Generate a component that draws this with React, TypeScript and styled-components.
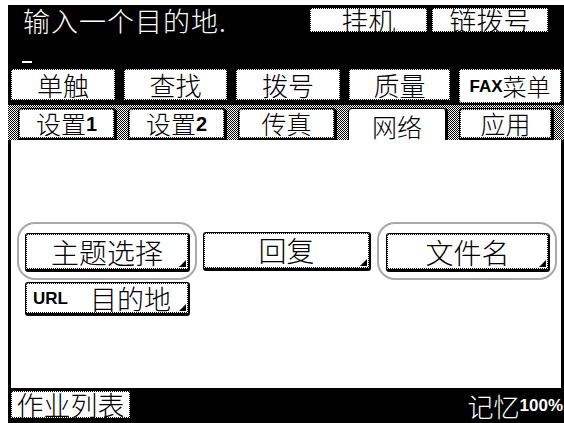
import React from "react";
import styled, {createGlobalStyle} from "styled-components";

// 1px checkerboard used for the dithered borders of the panel keys
const dither = "repeating-conic-gradient(#000 0% 25%, #fff 0% 50%)";

const GlobalStyle = createGlobalStyle`
  html, body {
    margin: 0;
    padding: 0;
    background: #fff;
  }
  body {
    font-family: "Noto Sans CJK SC", "Noto Sans", sans-serif;
  }
`;

const Frame = styled.div`
  width: 564px;
  height: 423px;
  box-sizing: border-box;
  padding: 5px 0 0 8px;
  overflow: hidden;
`;

const Screen = styled.div`
  width: 556px;
  height: 418px;
  background: #000;
  display: flex;
  flex-direction: column;
`;

const Header = styled.div`
  height: 63px;
  flex-shrink: 0;
  display: flex;
  justify-content: space-between;
  align-items: flex-start;
`;

const Prompt = styled.div`
  padding-left: 14px;
  display: flex;
  flex-direction: column;
  color: #fff;
`;

const PromptText = styled.div`
  font-size: 27px;
  font-weight: 300;
  line-height: 32px;
  padding-left: 1px;
  letter-spacing: 1px;
`;

const Cursor = styled.div`
  width: 10px;
  height: 2px;
  margin-top: 24px;
  background: #fff;
`;

const HeaderKeys = styled.div`
  display: flex;
  gap: 2px;
  margin: 2px 14px 0 0;
`;

const Key = styled.div<{ $w: number; $h: number; $size?: number; $more?: boolean; $open?: boolean; $start?: boolean }>`
  position: relative;
  box-sizing: border-box;
  width: ${p => p.$w}px;
  height: ${p => p.$h}px;
  flex-shrink: 0;
  border: 1px solid #000;
  border-right-width: 2px;
  border-bottom-width: ${p => (p.$open ? 0 : 3)}px;
  border-radius: 3px;
  padding: 1px;
  background: linear-gradient(#fff, #fff) content-box, ${dither} padding-box;
  background-size: auto, 2px 2px;
  display: flex;
  align-items: center;
  justify-content: ${p => (p.$start ? "flex-start" : "center")};
  font-size: ${p => p.$size ?? 26}px;
  font-weight: 300;
  line-height: 1;
  color: #000;
  white-space: nowrap;

  ${p => p.$more && `
    &::after {
      content: "";
      position: absolute;
      right: 2px;
      bottom: 2px;
      border-left: 7px solid transparent;
      border-bottom: 7px solid #000;
    }
  `}
`;

const Latin = styled.span<{ $size?: number; $gap?: number; $lead?: number }>`
  font-family: "Liberation Sans", Arial, sans-serif;
  font-weight: 700;
  font-size: ${p => p.$size ?? 17}px;
  margin-left: ${p => p.$lead ?? 0}px;
  margin-right: ${p => p.$gap ?? 0}px;
`;

const MenuRow = styled.div`
  height: 35px;
  flex-shrink: 0;
  display: flex;
  gap: 6px;
  padding-left: 2px;
`;

const TabStrip = styled.div`
  height: 37px;
  flex-shrink: 0;
  box-sizing: border-box;
  border-top: 2px solid #000;
  background: ${dither};
  background-size: 2px 2px;
  display: flex;
  align-items: flex-end;
  gap: 11px;
  padding-left: 10px;
`;

const Tab = styled.div<{ $w: number; $active?: boolean }>`
  box-sizing: border-box;
  width: ${p => p.$w}px;
  height: ${p => (p.$active ? 34 : 32)}px;
  border: 1px solid #000;
  border-right-width: 3px;
  border-bottom: ${p => (p.$active ? "none" : "2px solid #000")};
  border-radius: 4px 4px 0 0;
  padding: 1px 1px ${p => (p.$active ? 0 : 1)}px 1px;
  background: linear-gradient(#fff, #fff) content-box, ${p => (p.$active ? "#fff" : dither)} padding-box;
  background-size: auto, 2px 2px;
  display: flex;
  align-items: center;
  justify-content: center;
  font-size: 25px;
  font-weight: 300;
  line-height: 1;
  color: #000;
  margin-bottom: ${p => (p.$active ? -2 : 0)}px;
`;

const Panel = styled.div`
  flex: 1;
  background: #fff;
  border-left: 3px solid #000;
  border-right: 3px solid #000;
  padding: 82px 0 0 6px;
  display: flex;
  flex-direction: column;
`;

const KeyRow = styled.div`
  display: flex;
  align-items: center;
  gap: 6px;
`;

const Ring = styled.div<{ $left: number; $right: number }>`
  border: 2px solid #a8a8a8;
  border-radius: 18px;
  padding: 9px ${p => p.$right}px 6px ${p => p.$left}px;
`;

const SubRow = styled.div`
  padding: 2px 0 0 8px;
`;

const Footer = styled.div`
  height: 35px;
  flex-shrink: 0;
  box-sizing: border-box;
  padding: 2px 1px 2px 2px;
  display: flex;
  align-items: stretch;
  justify-content: space-between;
`;

const Memory = styled.div`
  display: flex;
  align-items: center;
  color: #fff;
  font-size: 26px;
  font-weight: 300;
  line-height: 1;
`;

const menu = [
    {label: "单触", w: 107},
    {label: "查找", w: 106},
    {label: "拨号", w: 107},
    {label: "质量", w: 104},
];

const tabs = [
    {label: "设置", num: "1", w: 99},
    {label: "设置", num: "2", w: 99},
    {label: "传真", w: 99},
    {label: "网络", w: 100, active: true},
    {label: "应用", w: 95},
];

export default function App() {
    return (
        <Frame>
            <GlobalStyle/>
            <Screen>
                <Header>
                    <Prompt>
                        <PromptText>输入一个目的地.</PromptText>
                        <Cursor/>
                    </Prompt>
                    <HeaderKeys>
                        <Key $w={120} $h={28} $size={27}>挂机</Key>
                        <Key $w={119} $h={28} $size={27}>链拨号</Key>
                    </HeaderKeys>
                </Header>

                <MenuRow>
                    {menu.map(m => <Key key={m.label} $w={m.w} $h={35}>{m.label}</Key>)}
                    <Key $w={105} $h={35} $size={24} $open><Latin>FAX</Latin>菜单</Key>
                </MenuRow>

                <TabStrip>
                    {tabs.map((t, i) =>
                        <Tab key={i} $w={t.w} $active={t.active}>
                            {t.label}{t.num && <Latin $size={20}>{t.num}</Latin>}
                        </Tab>
                    )}
                </TabStrip>

                <Panel>
                    <KeyRow>
                        <Ring $left={6} $right={5}>
                            <Key $w={165} $h={39} $size={28} $more>主题选择</Key>
                        </Ring>
                        <Key $w={168} $h={39} $size={28} $more>回复</Key>
                        <Ring $left={7} $right={5}>
                            <Key $w={164} $h={39} $size={28} $more>文件名</Key>
                        </Ring>
                    </KeyRow>
                    <SubRow>
                        <Key $w={165} $h={34} $size={27} $more $start>
                            <Latin $size={17} $lead={6} $gap={22}>URL</Latin>目的地
                        </Key>
                    </SubRow>
                </Panel>

                <Footer>
                    <Key $w={122} $h={31} $size={27}>作业列表</Key>
                    <Memory>记忆<Latin $size={17}>100%</Latin></Memory>
                </Footer>
            </Screen>
        </Frame>
    );
}
